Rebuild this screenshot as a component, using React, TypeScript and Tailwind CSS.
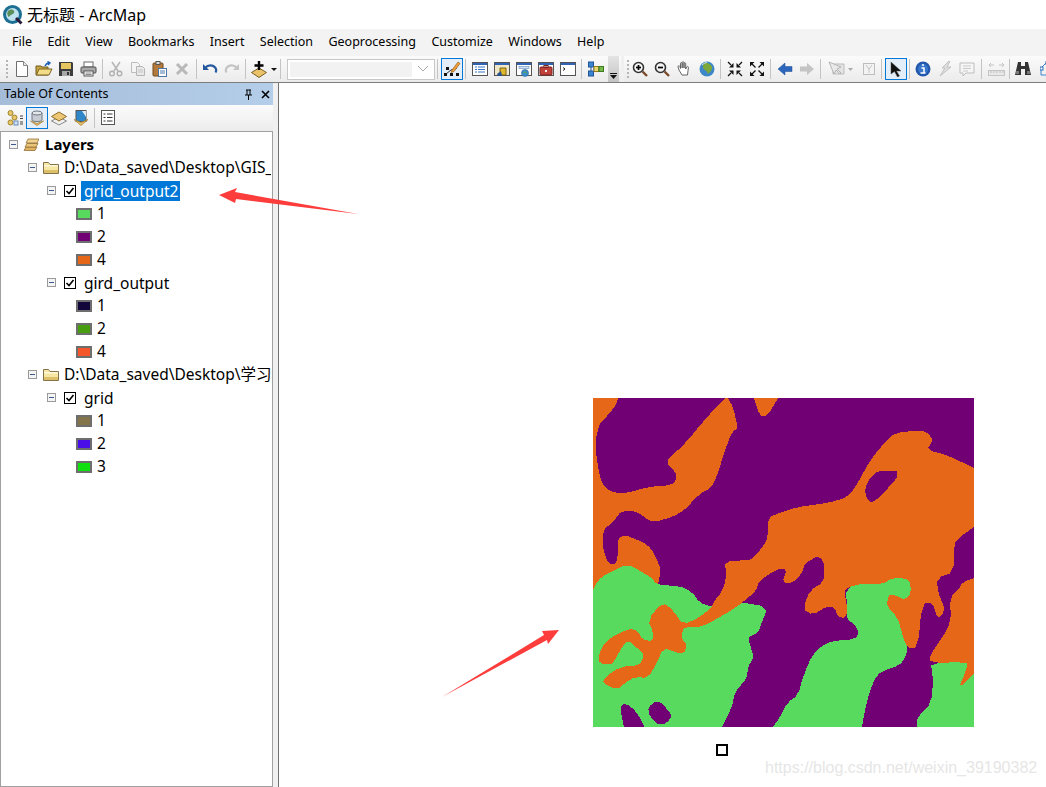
import React from "react";

const Svg = ({ children, w = 16, h = 16 }: { children: React.ReactNode; w?: number; h?: number }) => (
  <svg width={w} height={h} viewBox={`0 0 ${w} ${h}`} className="block">{children}</svg>
);

const NewDoc = () => <Svg><path d="M2.500 .5h7l4 4v11h-11z" fill="#fff" stroke="#6d6d6d" /><path d="M9.500 .5v4h4" fill="#e8e8e8" stroke="#8a8a8a" /></Svg>;
const OpenF = () => <Svg w={18}><path d="M1 14V5h5l1 1h6v8z" fill="#c9a53f" stroke="#6e5a20" /><path d="M1.500 14l2.500-6h13l-3 6z" fill="#f3dc86" stroke="#7b6526" /><path d="M10 5c1-2 2.500-3 4-3M12.500 0.500l2.500 1.500-2 2" fill="none" stroke="#1d62b8" strokeWidth="1.400" /></Svg>;
const Save = () => <Svg><path d="M1 1h13l1 1v13H1z" fill="#3d3d3d" /><rect x="3" y="2" width="10" height="6" fill="#e6c75f" /><rect x="4" y="10" width="8" height="5" fill="#a8a8a8" /><rect x="9" y="11" width="2" height="3" fill="#333" /></Svg>;
const Print = () => <Svg w={17}><rect x="4" y="1" width="9" height="5" fill="#fff" stroke="#6b6b6b" /><rect x="1" y="6" width="15" height="6" rx="1" fill="#a9a9a9" stroke="#4f4f4f" /><rect x="4" y="10" width="9" height="5" fill="#fff" stroke="#555" /><path d="M5.500 12h6M5.500 13.500h6" stroke="#888" /></Svg>;
const Cut = () => <Svg><path d="M4 1l6 9M12 1L6 10" stroke="#b5b5b5" strokeWidth="1.500" fill="none" /><circle cx="4" cy="12.500" r="2.300" fill="none" stroke="#b0b0b0" strokeWidth="1.400" /><circle cx="11.500" cy="12.500" r="2.300" fill="none" stroke="#b0b0b0" strokeWidth="1.400" /></Svg>;
const Copy = () => <Svg><path d="M1.500 1.500h6l2 2v8h-8z" fill="#f4f4f4" stroke="#bcbcbc" /><path d="M6.500 5.500h6l2 2v7h-8z" fill="#e8e8e8" stroke="#b5b5b5" /><path d="M8 9h5M8 11h5" stroke="#c5c5c5" /></Svg>;
const Paste = () => <Svg><rect x="1" y="2" width="10" height="13" rx="1" fill="#b47a3c" stroke="#6f4a20" /><rect x="4" y="0.500" width="4" height="3" fill="#dedede" stroke="#555" /><rect x="6.500" y="7.500" width="8" height="8" fill="#fff" stroke="#4c78a8" /><path d="M8 10h5M8 12h5" stroke="#4c78a8" /></Svg>;
const Del = () => <Svg><path d="M3 3l10 10M13 3L3 13" stroke="#b9b9b9" strokeWidth="3" /></Svg>;
const Undo = ({ c = "#245a9d" }: { c?: string }) => <Svg><path d="M3 7c3-3.500 8-3.500 10.500 0 1 1.500 0.800 3 0 4.500" fill="none" stroke={c} strokeWidth="2.200" /><path d="M1 3v6h6z" fill={c} /></Svg>;
const Redo = () => <div className="-scale-x-100"><Undo c="#c4c4c4" /></div>;
const AddData = () => <Svg h={17}><path d="M8 7l7.500 4.500L8 16.500.5 11.500z" fill="#eac26a" stroke="#7d5f22" /><path d="M8 0v9M3.500 4.500h9" stroke="#000" strokeWidth="2.400" /></Svg>;
const Caret = () => <Svg w={6} h={3}><path d="M0 0h6L3 3z" fill="#111" /></Svg>;

const Editor = () => <Svg w={18} h={18}><path d="M3 14L8 10l6-2" fill="none" stroke="#333" /><rect x="1" y="13" width="3" height="3" fill="#111" /><rect x="7" y="13" width="3" height="3" fill="#111" /><rect x="13" y="13" width="3" height="3" fill="#111" /><rect x="3" y="7" width="3" height="3" fill="#111" /><path d="M9 10l6-8 2 1.500-6 8-3 1z" fill="#ea9f3c" stroke="#a4621a" strokeWidth="0.700" /></Svg>;
const WinBase = ({ children }: { children?: React.ReactNode }) => <Svg><rect x="0.500" y="1.500" width="15" height="13" fill="#fff" stroke="#555" /><rect x="1" y="2" width="14" height="2" fill="#2f63b5" />{children}</Svg>;
const TableWin = () => <WinBase><path d="M3 6h2M6 6h7M3 8.500h2M6 8.500h7M3 11h2M6 11h7" stroke="#3b77c5" /></WinBase>;
const CatalogWin = () => <WinBase><rect x="1" y="4" width="14" height="10" fill="#f0e8c8" /><path d="M6 7h6v7H6z" fill="#e2b82c" stroke="#7a6310" /><path d="M3 13l4-3 1 5-4 0z" fill="#27528f" /></WinBase>;
const SearchWin = () => <WinBase><rect x="3" y="5.500" width="10" height="2" fill="#cfe0f3" stroke="#6a8fb9" strokeWidth="0.600" /><circle cx="9" cy="12" r="3.500" fill="#3d8ecf" stroke="#275a8f" strokeWidth="0.600" /><path d="M7 12c1-1.500 3-1.500 4 .5" fill="none" stroke="#5aa63c" /></WinBase>;
const ToolboxWin = () => <WinBase><rect x="2" y="6" width="12" height="8" rx="1" fill="#c0423a" stroke="#7a1f1a" /><rect x="6" y="4.500" width="4" height="2" fill="none" stroke="#7a1f1a" /><rect x="7" y="9" width="2" height="2" fill="#eee" /></WinBase>;
const PyWin = () => <WinBase><path d="M3 6.500l2 1.500-2 1.500" fill="none" stroke="#222" /></WinBase>;
const Model = () => <Svg><rect x="0.500" y="1" width="5" height="5" fill="#3c84d0" stroke="#1f5597" /><rect x="0.500" y="10" width="5" height="5" fill="#3c84d0" stroke="#1f5597" /><rect x="6" y="5.500" width="4.500" height="5" fill="#f0d870" stroke="#8f7a20" /><rect x="11" y="5.500" width="4.500" height="5" fill="#77b84b" stroke="#3f7a20" /><path d="M3 6v4M5 8h1" stroke="#1f5597" /></Svg>;
const ZoomI = ({ plus }: { plus?: boolean }) => <Svg><circle cx="6.500" cy="6.500" r="5" fill="#f4f4f4" stroke="#333" strokeWidth="1.600" /><path d="M10.500 10.500l4.500 4.500" stroke="#7b4a2a" strokeWidth="2.400" /><path d="M4 6.500h5" stroke="#000" strokeWidth="1.700" />{plus && <path d="M6.500 4v5" stroke="#000" strokeWidth="1.700" />}</Svg>;
const Hand = () => <Svg><path d="M3 9L2 5.500c0-1 1.500-1 2 0l.5 2V2.500c0-1.200 1.500-1.200 1.700 0V7V1.500c0-1.100 1.700-1.100 1.800 0V7V2.500c0-1 1.600-1 1.700 0V8l1-2c.6-1 2-.5 1.700.6L11.500 14H6z" fill="#fff" stroke="#555" strokeWidth="0.900" /></Svg>;
const Globe = () => <Svg><circle cx="8" cy="8" r="7.500" fill="#3e87c9" /><path d="M5 2c3-1 7 1 8 4 .5 3-2 5-4 7-1-2-1-3-3-4-2-1-3-3-1-7z" fill="#7ca83a" /><path d="M3 4c2-2 4-2.500 5-2.500" stroke="#cfe4f5" fill="none" /></Svg>;
const Fixed = ({ out }: { out?: boolean }) => {
  const a = out ? <g><path d="M1 1h4.500L1 5.500z" fill="#111" /><path d="M3 3l3.500 3.500" stroke="#111" strokeWidth="1.300" /></g> : <g><path d="M6.500 6.500H2L6.500 2z" fill="#111" /><path d="M1 1l3 3" stroke="#111" strokeWidth="1.300" /></g>;
  return <Svg>{a}<g transform="translate(16 0) scale(-1 1)">{a}</g><g transform="translate(0 16) scale(1 -1)">{a}</g><g transform="translate(16 16) scale(-1 -1)">{a}</g></Svg>;
};
const Back = () => <Svg><path d="M8 2L1 8l7 6v-3.500h7v-5H8z" fill="#2c67bd" stroke="#1c4a90" strokeWidth="0.500" /></Svg>;
const Fwd = () => <Svg><path d="M8 2l7 6-7 6v-3.500H1v-5h7z" fill="#c4c4c4" /></Svg>;
const SelFeat = () => <Svg w={17}><path d="M5 3h11v10H5z" fill="#e3e3e3" stroke="#bdbdbd" /><path d="M1 1l5 12 2-4 4 4 1-1-4-4 4-2z" fill="#e9e9e9" stroke="#b5b5b5" /></Svg>;
const Clear = () => <Svg w={12} h={12}><rect x="0.500" y="0.500" width="11" height="11" fill="#f3f3f3" stroke="#bdbdbd" /><path d="M3 2l3 4 3-4M6 6v4" stroke="#c4c4c4" fill="none" /></Svg>;
const Ptr = () => <Svg w={12} h={15}><path d="M1 0l10 9H6.500l3 5-2 1-3-5.500L1 12z" fill="#111" stroke="#555" strokeWidth="0.500" /></Svg>;
const Info = () => <Svg><circle cx="8" cy="8" r="7.500" fill="#2258ad" /><circle cx="8" cy="8" r="5" fill="#3876cc" /><path d="M8 3v2M6.500 7H9v5h1.500M5.500 12h5" stroke="#fff" strokeWidth="1.500" fill="none" /></Svg>;
const Bolt = () => <Svg><path d="M12 0L5 7h3L3 15 14 6h-4l3-6z" fill="#dedede" stroke="#c2c2c2" /></Svg>;
const Msg = () => <Svg><path d="M1 2h14v10H7l-3 3v-3H1z" fill="#f6f6f6" stroke="#bdbdbd" /><path d="M4 5h8M4 7.500h8M4 10h5" stroke="#c9c9c9" /></Svg>;
const Measure = () => <Svg w={17}><path d="M1 4h5M3 2L1 4l2 2M11 4h5M14 2l2 2-2 2" stroke="#c4c4c4" fill="none" /><rect x="0.500" y="9.500" width="16" height="5" fill="#e9e9e9" stroke="#c4c4c4" /><path d="M3 10v2M6 10v2M9 10v2M12 10v2M15 10v2" stroke="#bdbdbd" /></Svg>;
const Binos = () => <Svg><path d="M3 1h3v4h4V1h3l3 13h-6V8H6v6H0z" fill="#333" /><rect x="1" y="10" width="3" height="3" fill="#777" /><rect x="12" y="10" width="3" height="3" fill="#777" /></Svg>;
const Topo = () => <Svg w={10}><path d="M1 7l5-5M1 7v7h8" stroke="#3c84d0" fill="none" /><rect x="6" y="0.500" width="3" height="3" fill="#fff" stroke="#2e6db5" /><rect x="0" y="6" width="3" height="3" fill="#fff" stroke="#2e6db5" /></Svg>;

const TocList = () => <Svg w={18}><circle cx="3.500" cy="3" r="2.500" fill="#e7c66a" stroke="#a2842a" /><circle cx="7.500" cy="7.500" r="2.500" fill="#e7c66a" stroke="#a2842a" /><circle cx="3.500" cy="12.500" r="2.500" fill="#e7c66a" stroke="#a2842a" /><rect x="7" y="11" width="4" height="4" fill="#cfe0f3" stroke="#6a8fb9" /><path d="M13 6h3M13 8.500h3M13 12h3M13 14h3" stroke="#444" /></Svg>;
const TocDb = () => <Svg><path d="M3 3v7c0 2 10 2 10 0V3z" fill="#c8cdd4" stroke="#6e7680" /><ellipse cx="8" cy="3" rx="5" ry="2" fill="#e4e7ea" stroke="#6e7680" /><path d="M1.500 11L8 15.500 14.500 11 8 13.500z" fill="#e9c06a" stroke="#a17a25" strokeWidth="0.700" /></Svg>;
const TocLayer = () => <Svg><path d="M8 7l7.500 4L8 15 .5 11z" fill="#f0f0f0" stroke="#8a8a8a" /><path d="M8 2l7.500 4.500L8 11 .5 6.500z" fill="#eec774" stroke="#8d6d28" /></Svg>;
const TocSrc = () => <Svg><rect x="3" y="0.500" width="10" height="11" fill="#2f86c8" stroke="#555" /><path d="M9 1l4 0v6z" fill="#dbe8f3" /><path d="M1 9.500L8 15.500 15 9.500 8 12.500z" fill="#e9c06a" stroke="#a17a25" strokeWidth="0.700" /></Svg>;
const TocOpt = () => <Svg w={14}><rect x="0.500" y="0.500" width="13" height="14" fill="#fff" stroke="#555" /><path d="M2.500 4h2M6 4h5.500M2.500 7.500h2M6 7.500h5.500M2.500 11h2M6 11h5.500" stroke="#333" /></Svg>;

const Logo = () => (
  <svg width="20" height="20" viewBox="0 0 20 20" className="block">
    <circle cx="9.500" cy="9.500" r="9.500" fill="#1d6f93" />
    <circle cx="9.500" cy="9.500" r="6.500" fill="#bfe2ef" />
    <path d="M5 6c2-2 5-2 6 0s-1 3-3 4-2 3-3 1-1-3 0-5z" fill="#5b8f5a" />
    <path d="M13 13l5.500 5.500" stroke="#2a1a3a" strokeWidth="3" />
  </svg>
);
const Folder = () => (
  <svg width="16" height="13" viewBox="0 0 16 13" className="block">
    <path d="M.5 12.500v-11h5l1.500 2h8.500v9z" fill="#f6e7a4" stroke="#85724a" />
    <rect x="1" y="4" width="14" height="1.500" fill="#fff8d8" />
    <rect x="1" y="9" width="14" height="3" fill="#dcc06a" />
  </svg>
);
const LayersI = () => (
  <svg width="16" height="13" viewBox="0 0 16 13" className="block">
    <path d="M3 9h11l-2 3.500H1z" fill="#e0b35f" stroke="#94713a" strokeWidth="0.800" />
    <path d="M4 5.500h11l-2 3.500H2z" fill="#eac67a" stroke="#94713a" strokeWidth="0.800" />
    <path d="M5 1h11l-2 4H3z" fill="#f0d390" stroke="#94713a" strokeWidth="0.800" />
  </svg>
);
const Exp = () => (
  <div className="w-[9px] h-[9px] border border-[#9a9a9a] bg-[#f4f4f4] flex items-center justify-center shrink-0">
    <div className="w-[5px] h-px bg-[#3d5a8a]" />
  </div>
);
const Check = () => (
  <svg width="12" height="12" viewBox="0 0 12 12" className="block shrink-0">
    <rect x="0.500" y="0.500" width="11" height="11" fill="#fff" stroke="#000" />
    <path d="M2.500 6l2.500 2.500 4.500-5.500" fill="none" stroke="#000" strokeWidth="1.600" />
  </svg>
);

const Sep = () => <div className="w-[5px] h-[20px] flex justify-center shrink-0"><div className="w-px h-full bg-[#c4c4c4]" /></div>;
const B = ({ children }: { children: React.ReactNode }) => <div className="w-[22px] h-[22px] flex items-center justify-center shrink-0">{children}</div>;
const Active = ({ children }: { children: React.ReactNode }) => <div className="w-[22px] h-[22px] flex items-center justify-center shrink-0 border border-[#0078d7] bg-[#e3eef8]">{children}</div>;
const Grip = () => <div className="w-[2px] h-[18px] shrink-0 border-l-2 border-dotted border-[#b5b5b5]" />;
const G1 = () => <div className="w-px shrink-0" />;
const G2 = () => <div className="w-[2px] shrink-0" />;
const G3 = () => <div className="w-[3px] shrink-0" />;
const G4 = () => <div className="w-[4px] shrink-0" />;
const G6 = () => <div className="w-[6px] shrink-0" />;

const Row = ({ lvl, exp = true, children }: { lvl: number; exp?: boolean; children: React.ReactNode }) => (
  <div className={`flex items-center h-[23px] whitespace-nowrap overflow-hidden mr-[1px] ${lvl === 0 ? "pl-[8px]" : lvl === 1 ? "pl-[27px]" : lvl === 2 ? "pl-[46px]" : "pl-[75px]"}`}>
    {exp && <Exp />}
    {children}
  </div>
);
const Leg = ({ c, n }: { c: string; n: string }) => (
  <Row lvl={3} exp={false}>
    <div className="w-[16px] h-[12px] border-2 border-[#6e6e6e] shrink-0" style={{ background: c }} />
    <span className="ml-[5px]">{n}</span>
  </Row>
);
const Lyr = ({ name, sel }: { name: string; sel?: boolean }) => (
  <Row lvl={2}>
    <div className="ml-[8px]"><Check /></div>
    <span className={`ml-[5px] pl-[3px] pr-[2px] h-[20px] leading-[20px] ${sel ? "bg-[#0078d7] text-white" : ""}`}>{name}</span>
  </Row>
);
const Src = ({ t }: { t: string }) => (
  <Row lvl={1}>
    <div className="ml-[6px]"><Folder /></div>
    <span className="ml-[5px]">{t}</span>
  </Row>
);

const PURPLE = "#720075";
const ORANGE = "#e56717";
const GREEN = "#57da5e";

const orange = [
  "593,398 618,398 617,403 610,413 600,423 598,430 595,443 597,460 600,478 605,488 615,493 627,493 648,487 672,485 676,480 676,472 665,462 675,453 688,440 702,423 718,405 725,398 728,398 733,407 738,428 732,432 725,450 718,473 712,487 698,495 685,510 672,517 655,522 648,520 638,512 622,510 613,522 603,530 603,547 605,555 608,562 612,565 617,562 618,550 618,538 625,535 638,540 648,545 655,555 661,570 657,590 593,600",
  "754,398 778,398 768,415 760,417",
  "780,513 797,507 828,503 848,497 858,483 870,460 887,440 895,433 920,430 928,433 933,440 927,450 947,455 974,468 974,527 960,537 954,543 954,572 937,578 938,593 945,608 942,615 937,618 933,603 922,603 918,647 908,649 903,637 898,618 887,607 888,595 895,595 905,600 911,593 910,580 895,577 880,585 865,583 845,588 845,597 848,610 845,618 838,617 835,608 827,606 813,615 803,609 810,590 823,583 825,567 820,555 805,563 802,573 793,583 782,583 787,568 775,570 758,582 757,590 743,602 732,610 718,618 702,627 685,627 682,632 682,640 687,645 684,654 675,652 663,648 657,663 648,678 635,677 625,683 617,690 603,683 605,677 620,667 640,665 643,658 643,653 637,648 628,640 622,647 615,660 610,665 600,663 598,658 603,645 610,638 628,629 637,630 643,640 653,641 653,632 648,620 662,602 673,610 683,625 700,617 712,607 713,603 723,590 727,573 724,562 745,560 751,560 762,548 768,538 768,517",
  "974,578 963,582 958,590 950,597 951,622 942,638 930,655 930,663 967,662 967,668 958,690 974,673",
];
const green = [
  "593,590 598,580 608,573 628,564 642,572 652,578 657,585 680,586 692,592 700,603 712,607 740,602 768,607 762,622 758,633 748,637 750,645 754,657 748,667 747,678 735,692 732,707 722,727 593,727",
  "845,588 865,583 880,585 895,577 910,580 911,593 905,600 895,595 888,595 887,607 898,618 903,637 908,649 905,658 900,665 885,670 877,675 870,690 865,710 862,727 773,727 780,717 787,703 798,695 803,677 812,655 823,645 833,641 855,639 859,633 855,625 846,618 848,610",
  "930,663 967,662 967,668 958,690 974,673 974,727 917,727 917,717 932,703 933,673",
];
const purple = [
  "620,707 625,703 635,710 643,723 644,727 624,727",
  "648,707 658,700 668,710 672,716 667,723 658,725 650,717",
  "880,471 903,471 880,497 871,503 866,497 865,488 870,478 875,473",
];

const soften = (s: string) => {
  const p = s.split(" ").map((t) => t.split(",").map(Number));
  const out: string[] = [];
  p.forEach(([x, y], i) => {
    const a = p[(i + p.length - 1) % p.length];
    const b = p[(i + 1) % p.length];
    if (x === 593 || x === 974 || y === 398 || y === 727) {
      out.push(`${x},${y}`);
    } else {
      out.push(`${x + (a[0] - x) * 0.25},${y + (a[1] - y) * 0.25}`);
      out.push(`${x + (b[0] - x) * 0.25},${y + (b[1] - y) * 0.25}`);
    }
  });
  return out.join(" ");
};

export default function App() {
  return (
    <div className="relative w-[1046px] h-[787px] overflow-hidden bg-white flex flex-col text-black font-['Noto_Sans','Noto_Sans_CJK_SC',sans-serif]">
      <div className="h-[29px] flex items-center pl-[3px] gap-[4px] bg-white shrink-0">
        <Logo />
        <span className="text-[16px] leading-none">无标题 - ArcMap</span>
      </div>
      <div className="h-[27px] bg-[#f3f3f3] flex items-center pl-[12px] gap-[15.4px] text-[12.5px] shrink-0 whitespace-nowrap">
        {["File", "Edit", "View", "Bookmarks", "Insert", "Selection", "Geoprocessing", "Customize", "Windows", "Help"].map((m) => (
          <span key={m}>{m}</span>
        ))}
      </div>
      <div className="h-[27px] bg-[#f0f0f0] border-b border-[#7d7d7d] flex items-center shrink-0 overflow-hidden">
        <div className="w-[621px] h-full pl-[6px] flex items-center bg-gradient-to-b from-[#fbfbfb] to-[#ebebeb] shrink-0">
          <Grip />
          <G3 />
          <B><NewDoc /></B><B><OpenF /></B><B><Save /></B><B><Print /></B>
          <G1 /><Sep />
          <B><Cut /></B><B><Copy /></B><B><Paste /></B><B><Del /></B>
          <G1 /><Sep />
          <B><Undo /></B><B><Redo /></B>
          <Sep />
          <B><AddData /></B>
          <div className="w-[8px] flex justify-center shrink-0"><Caret /></div>
          <Sep />
          <G4 />
          <div className="w-[148px] h-[21px] bg-white border border-[#c8c8c8] flex items-center justify-end shrink-0 p-[2px] pr-0">
            <div className="flex-1 h-full bg-[#f2f2f2]" />
            <svg width="22" height="10" viewBox="0 0 22 10"><path d="M6 2l5 5 5-5" fill="none" stroke="#a8a8a8" /></svg>
          </div>
          <Sep /><G1 />
          <Active><Editor /></Active>
          <Sep /><G1 />
          <B><TableWin /></B><B><CatalogWin /></B><B><SearchWin /></B><B><ToolboxWin /></B><B><PyWin /></B>
          <Sep /><G1 />
          <B><Model /></B>
          <G1 />
          <div className="w-[11px] h-full bg-gradient-to-b from-[#e4e4e4] to-[#c4c4c4] flex items-end justify-center pb-[3px] shrink-0">
            <svg width="7" height="6" viewBox="0 0 7 6"><path d="M0 0h7v1H0zM0 2h7L3.500 6z" fill="#111" /></svg>
          </div>
        </div>
        <div className="w-[3px] shrink-0" />
        <div className="flex-1 h-full flex items-center bg-gradient-to-b from-[#fbfbfb] to-[#ebebeb]">
          <G3 /><Grip />
          <B><ZoomI plus /></B><B><ZoomI /></B><B><Hand /></B><G1 /><B><Globe /></B>
          <Sep />
          <G1 /><B><Fixed /></B><B><Fixed out /></B>
          <Sep /><G1 />
          <B><Back /></B><B><Fwd /></B>
          <Sep /><G2 />
          <B><SelFeat /></B>
          <div className="w-[6px] flex justify-center shrink-0"><svg width="5" height="3" viewBox="0 0 5 3"><path d="M0 0h5L2.500 3z" fill="#aaa" /></svg></div>
          <G6 />
          <div className="w-[20px] flex justify-center shrink-0"><Clear /></div>
          <Sep /><G1 />
          <Active><Ptr /></Active>
          <Sep />
          <B><Info /></B><B><Bolt /></B><B><Msg /></B>
          <G1 /><Sep /><G1 />
          <B><Measure /></B>
          <Sep />
          <B><Binos /></B>
          <B><Topo /></B>
        </div>
      </div>
      <div className="flex flex-1 min-h-0">
        <aside className="w-[273px] flex flex-col shrink-0 bg-white">
          <div className="h-[22px] bg-gradient-to-r from-[#a5bdd9] to-[#b4cde8] flex items-center justify-between pl-[4px] pr-[2px] pt-[1px] text-[12.5px] shrink-0">
            <span>Table Of Contents</span>
            <div className="flex items-center gap-[8px] pr-[1px]">
              <svg width="9" height="11" viewBox="0 0 9 11"><path d="M2 1h5M3 1v5M6 1v5M1 6h7M4.500 6v5" stroke="#000" fill="none" /></svg>
              <svg width="9" height="9" viewBox="0 0 9 9"><path d="M1 1l7 7M8 1L1 8" stroke="#000" strokeWidth="1.600" /></svg>
            </div>
          </div>
          <div className="h-[26px] bg-gradient-to-b from-[#fbfbfb] to-[#ececec] flex items-center pl-[6px] shrink-0">
            <div className="w-[20px] flex justify-center"><TocList /></div>
            <Active><TocDb /></Active>
            <div className="w-[21px] flex justify-center"><TocLayer /></div>
            <div className="w-[23px] flex justify-center"><TocSrc /></div>
            <Sep />
            <div className="w-[21px] flex justify-center"><TocOpt /></div>
          </div>
          <div className="flex-1 border border-[#a0a0a0] pt-[1px] text-[15.5px] overflow-hidden">
            <Row lvl={0}>
              <div className="ml-[5px]"><LayersI /></div>
              <span className="ml-[6px] font-bold text-[15px]">Layers</span>
            </Row>
            <Src t="D:\Data_saved\Desktop\GIS_" />
            <Lyr name="grid_output2" sel />
            <Leg c={GREEN} n="1" />
            <Leg c={PURPLE} n="2" />
            <Leg c={ORANGE} n="4" />
            <Lyr name="gird_output" />
            <Leg c="#12063a" n="1" />
            <Leg c="#479f0f" n="2" />
            <Leg c="#f5572a" n="4" />
            <Src t="D:\Data_saved\Desktop\学习" />
            <Lyr name="grid" />
            <Leg c="#84744a" n="1" />
            <Leg c="#4a0fe8" n="2" />
            <Leg c="#10e010" n="3" />
          </div>
        </aside>
        <div className="w-[5px] bg-[#f0f0f0] shrink-0" />
        <main className="flex-1 relative bg-white border-l border-[#707070]">
          <svg width="381" height="329" viewBox="593 398 381 329" shapeRendering="crispEdges" className="absolute left-[314px] top-[315px]">
            <rect x="593" y="398" width="381" height="329" fill={PURPLE} />
            {orange.map((p, i) => <polygon key={i} points={soften(p)} fill={ORANGE} />)}
            {green.map((p, i) => <polygon key={i} points={soften(p)} fill={GREEN} />)}
            <polygon points={soften(orange[2])} fill={ORANGE} />
            {purple.map((p, i) => <polygon key={i} points={soften(p)} fill={PURPLE} />)}
          </svg>
          <div className="absolute left-[437px] top-[661px] w-[12px] h-[12px] border-2 border-black" />
          <span className="absolute left-[486px] top-[675px] text-[16px] leading-[20px] text-[#e6e6e6] font-['Liberation_Sans',sans-serif] whitespace-nowrap">https://blog.csdn.net/weixin_39190382</span>
        </main>
      </div>
      <svg width="1046" height="787" viewBox="0 0 1046 787" className="absolute inset-0 pointer-events-none">
        <polygon points="219,195 237,188 235,192 358,214 236,199 235,203" fill="#fd3c3c" />
        <polygon points="559,630 542,631 544,635 442,697 547,640 548,644" fill="#fd3c3c" />
      </svg>
    </div>
  );
}
